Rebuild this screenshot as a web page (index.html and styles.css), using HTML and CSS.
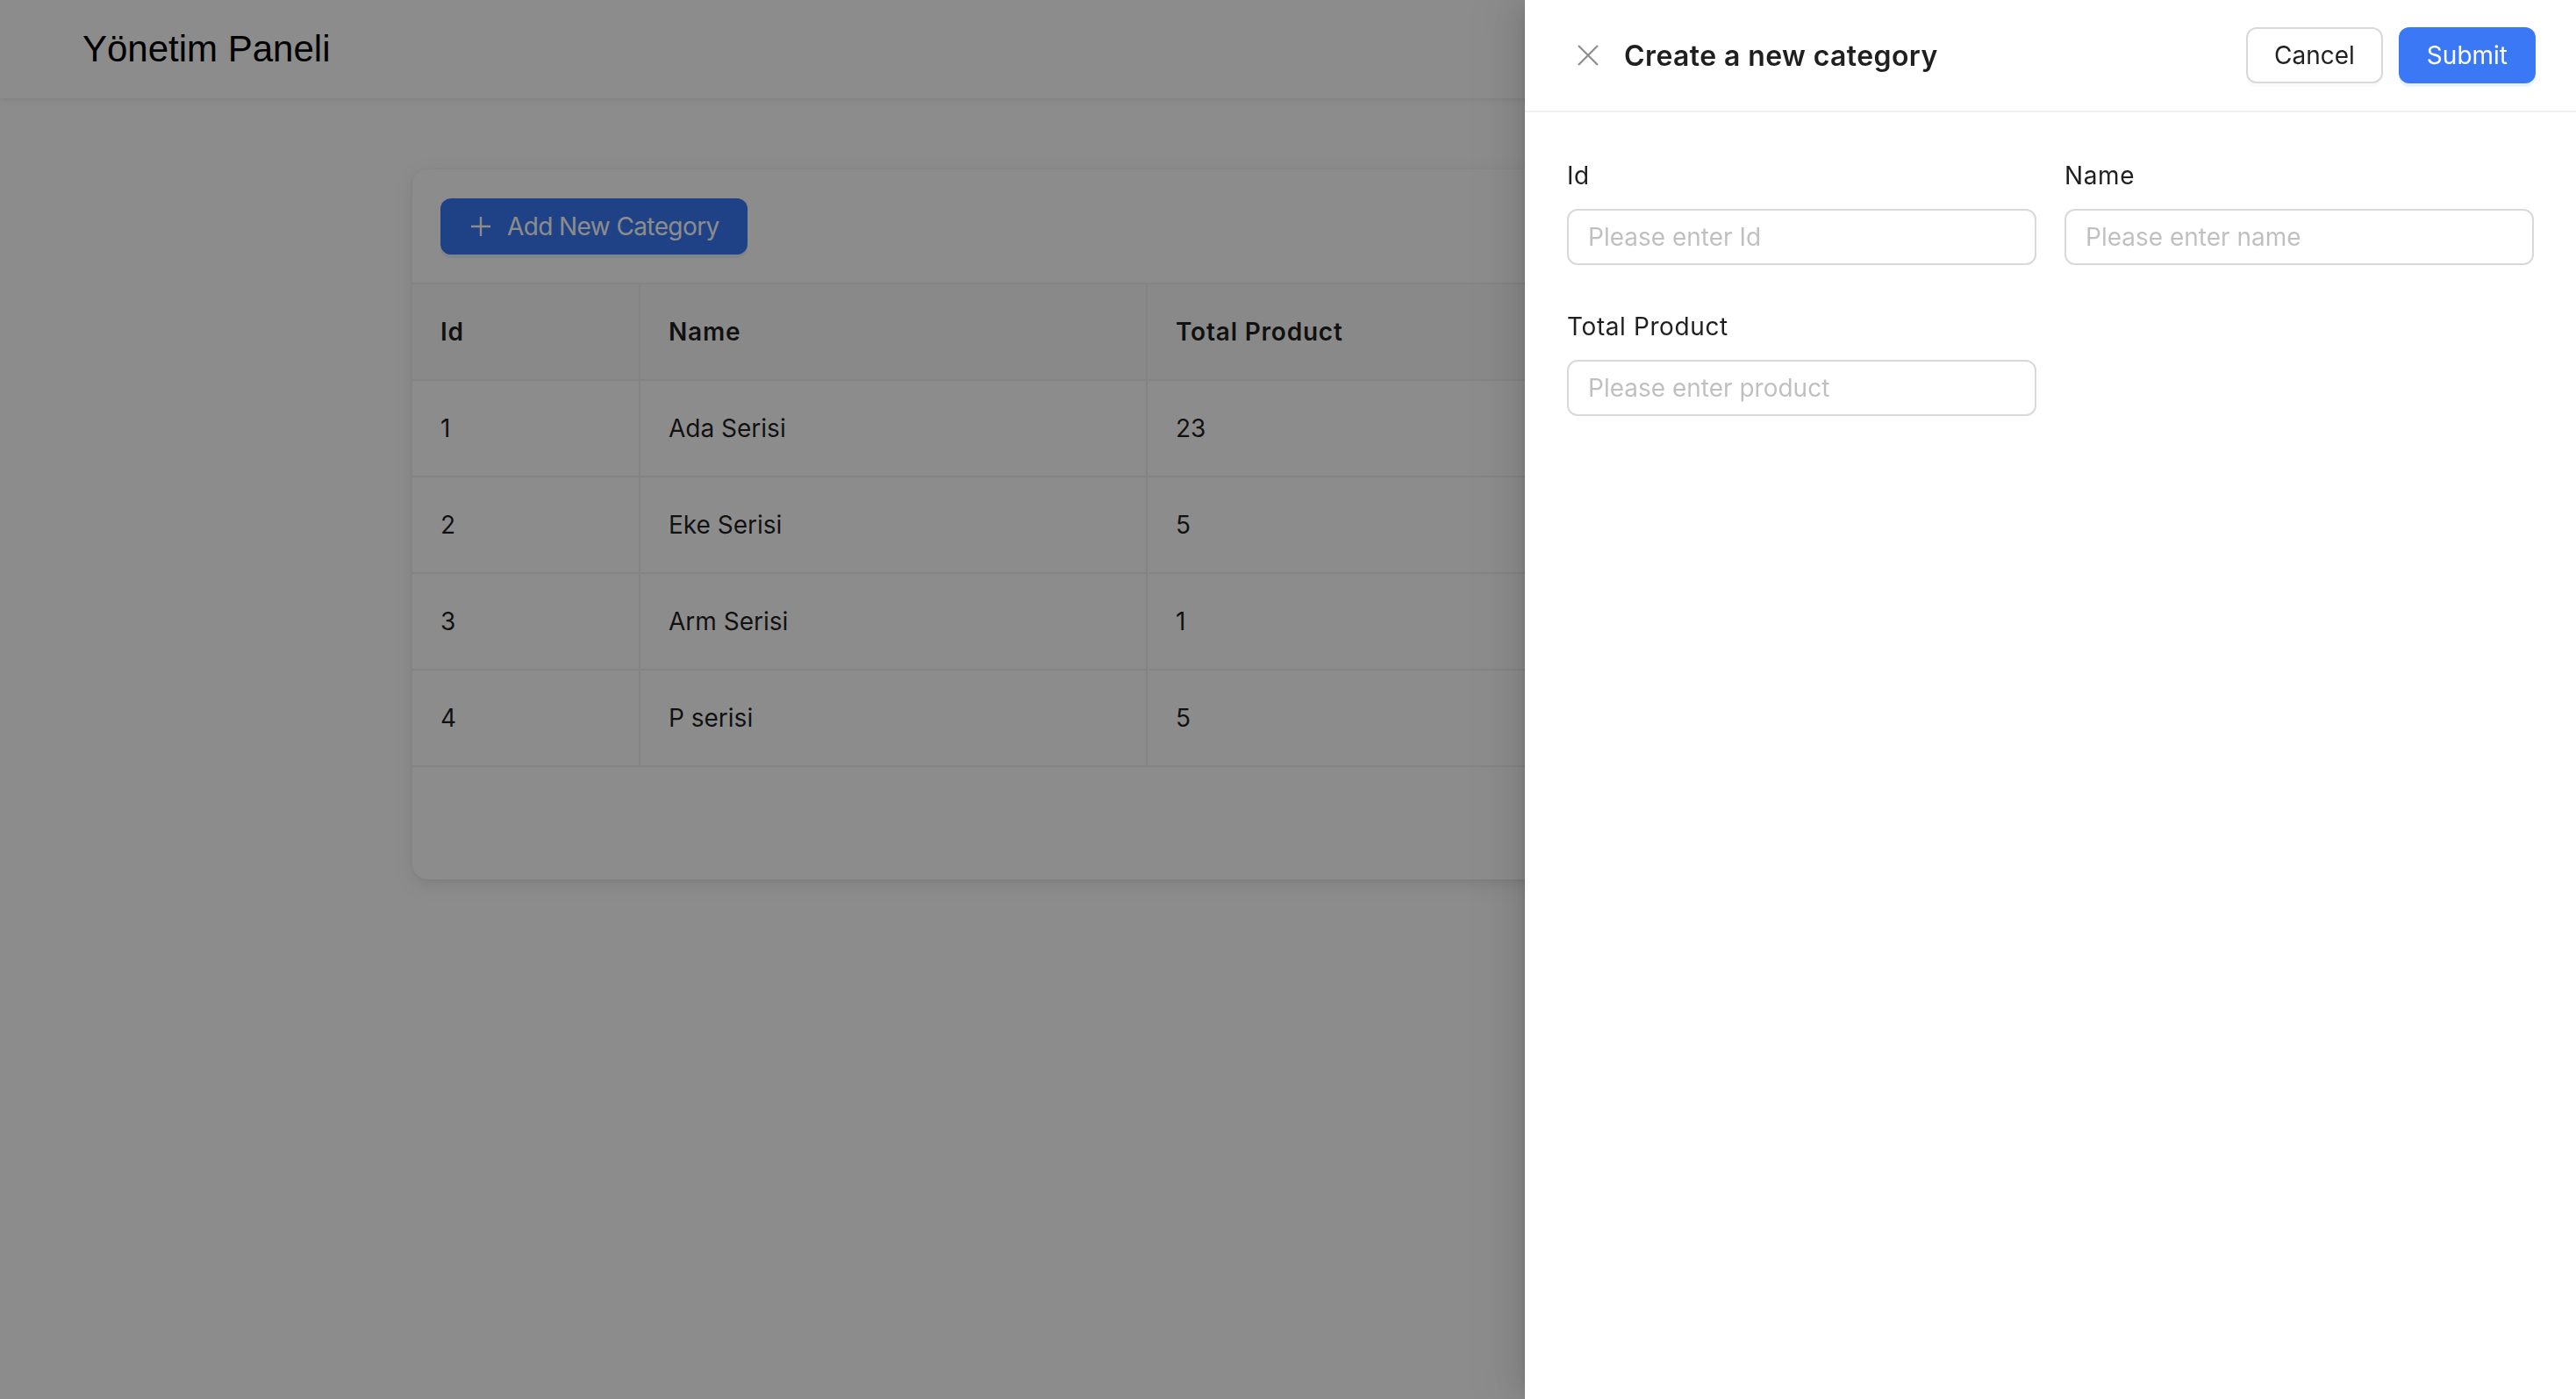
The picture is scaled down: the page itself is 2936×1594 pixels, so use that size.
FILE: index.html
```html
<!DOCTYPE html>
<html lang="tr">
<head>
<meta charset="utf-8">
<title>Yönetim Paneli</title>
<link rel="stylesheet" href="styles.css">
</head>
<body>
<div class="app">
  <header class="topbar">
    <div class="brand">Yönetim Paneli</div>
  </header>
  <main class="main">
    <section class="card">
      <div class="toolbar">
        <button class="btn btn-primary btn-add" type="button">
          <svg class="icon-plus" viewBox="0 0 28 28" width="28" height="28" aria-hidden="true">
            <path d="M14 3v22M3 14h22" stroke="currentColor" stroke-width="2.4" fill="none" stroke-linecap="butt"/>
          </svg>
          <span class="btn-add-text">Add New Category</span>
        </button>
      </div>
      <table class="table">
        <colgroup>
          <col class="c-id">
          <col class="c-name">
          <col class="c-total">
        </colgroup>
        <thead>
          <tr><th>Id</th><th>Name</th><th>Total Product</th></tr>
        </thead>
        <tbody>
          <tr><td>1</td><td>Ada Serisi</td><td>23</td></tr>
          <tr><td>2</td><td>Eke Serisi</td><td>5</td></tr>
          <tr><td>3</td><td>Arm Serisi</td><td>1</td></tr>
          <tr><td>4</td><td>P serisi</td><td>5</td></tr>
        </tbody>
      </table>
      <div class="card-foot"></div>
    </section>
  </main>
</div>

<div class="mask"></div>

<aside class="drawer">
  <div class="drawer-header">
    <button class="drawer-close" type="button" aria-label="Close">
      <svg viewBox="0 0 24 24" width="24" height="24" aria-hidden="true">
        <path d="M1 1L23 23M23 1L1 23" stroke="currentColor" stroke-width="2.2" fill="none"/>
      </svg>
    </button>
    <div class="drawer-title">Create a new category</div>
    <div class="drawer-extra">
      <button class="btn btn-default" type="button">Cancel</button>
      <button class="btn btn-primary" type="button">Submit</button>
    </div>
  </div>
  <div class="drawer-body">
    <form class="form">
      <div class="form-item">
        <label class="form-label" for="f-id">Id</label>
        <input class="input" id="f-id" type="text" placeholder="Please enter Id">
      </div>
      <div class="form-item">
        <label class="form-label" for="f-name">Name</label>
        <input class="input" id="f-name" type="text" placeholder="Please enter name">
      </div>
      <div class="form-item">
        <label class="form-label" for="f-total">Total Product</label>
        <input class="input" id="f-total" type="text" placeholder="Please enter product">
      </div>
    </form>
  </div>
</aside>
</body>
</html>
```

FILE: styles.css
```css
* { box-sizing: border-box; }

html, body {
  margin: 0;
  padding: 0;
  height: 100%;
  background: #ffffff;
}

body {
  font-family: Inter, "Noto Sans", "Liberation Sans", sans-serif;
  font-size: 28px;
  color: rgba(0, 0, 0, 0.88);
  overflow: hidden;
}

.app {
  min-height: 100%;
  display: flex;
  flex-direction: column;
}

.topbar {
  height: 112px;
  display: flex;
  align-items: center;
  padding: 0 94px;
  background: #ffffff;
  box-shadow: 0 2px 6px rgba(0, 0, 0, 0.09);
  position: relative;
  z-index: 1;
}

.brand {
  font-family: "Liberation Sans", Arial, sans-serif;
  font-size: 42px;
  line-height: 112px;
  color: #000000;
}

.main {
  padding: 81px 468px 0 470px;
}

.card {
  background: #ffffff;
  border-radius: 18px;
  box-shadow: 0 6px 22px rgba(0, 0, 0, 0.10), 0 1px 4px rgba(0, 0, 0, 0.05);
  overflow: hidden;
}

.toolbar {
  padding: 33px 32px 32px 32px;
  display: flex;
}

.btn {
  font-family: Inter, "Noto Sans", sans-serif;
  font-size: 28px;
  line-height: 44px;
  height: 64px;
  padding: 8px 30px;
  border-radius: 12px;
  border: 2px solid transparent;
  cursor: pointer;
  display: inline-flex;
  align-items: center;
  white-space: nowrap;
}

.btn-primary {
  background: #3a78f5;
  color: #ffffff;
  box-shadow: 0 4px 0 rgba(5, 145, 255, 0.1);
}

.btn-default {
  background: #ffffff;
  border-color: #d9d9d9;
  color: rgba(0, 0, 0, 0.88);
  box-shadow: 0 4px 0 rgba(0, 0, 0, 0.02);
}

.btn-add {
  gap: 16px;
  padding-left: 30px;
  padding-right: 30px;
}

.btn-add-text {
  letter-spacing: -0.6px;
}

.icon-plus {
  display: block;
  flex: none;
}

.table {
  width: 100%;
  border-collapse: separate;
  border-spacing: 0;
  table-layout: fixed;
  border-top: 2px solid #f0f0f0;
}

.c-id { width: 260px; }
.c-name { width: 578px; }

.table th,
.table td {
  padding: 32px 32px;
  line-height: 44px;
  font-size: 28px;
  text-align: left;
  border-bottom: 2px solid #f0f0f0;
  border-right: 2px solid #f0f0f0;
  color: rgba(0, 0, 0, 0.88);
}

.table th:last-child,
.table td:last-child {
  border-right: none;
}

.table th {
  background: #fafafa;
  font-weight: 600;
  letter-spacing: 0.8px;
}

.table td {
  background: #ffffff;
  font-weight: 400;
}

.card-foot {
  height: 128px;
}

.mask {
  position: fixed;
  inset: 0;
  background: rgba(0, 0, 0, 0.45);
  z-index: 10;
}

.drawer {
  position: fixed;
  top: 0;
  right: 0;
  bottom: 0;
  width: 1198px;
  background: #ffffff;
  z-index: 20;
  display: flex;
  flex-direction: column;
  box-shadow: -12px 0 32px 0 rgba(0, 0, 0, 0.08),
              -6px 0 12px -8px rgba(0, 0, 0, 0.12),
              -18px 0 56px 16px rgba(0, 0, 0, 0.05);
}

.drawer-header {
  height: 128px;
  flex: none;
  display: flex;
  align-items: center;
  padding: 0 46px 0 48px;
  border-bottom: 2px solid #f0f0f0;
}

.drawer-close {
  width: 48px;
  height: 48px;
  padding: 0;
  border: none;
  background: transparent;
  color: rgba(0, 0, 0, 0.45);
  display: flex;
  align-items: center;
  justify-content: center;
  cursor: pointer;
  flex: none;
}

.drawer-close svg { display: block; }

.drawer-title {
  margin-left: 17px;
  padding-top: 2px;
  flex: 1;
  font-size: 32px;
  font-weight: 600;
  line-height: 48px;
  letter-spacing: 0.4px;
  color: rgba(0, 0, 0, 0.88);
}

.drawer-extra {
  display: flex;
  gap: 18px;
}

.drawer-body {
  flex: 1;
  padding: 50px 48px 48px 48px;
}

.form {
  display: grid;
  grid-template-columns: 1fr 1fr;
  column-gap: 32px;
}

.form-item {
  display: flex;
  flex-direction: column;
  margin-bottom: 48px;
}

.form-label {
  font-size: 28px;
  line-height: 44px;
  padding-bottom: 16px;
  letter-spacing: 0.6px;
  color: rgba(0, 0, 0, 0.88);
}

.input {
  height: 64px;
  width: 100%;
  border: 2px solid #d9d9d9;
  border-radius: 12px;
  padding: 0 22px;
  font-family: Inter, "Noto Sans", sans-serif;
  font-size: 28px;
  color: rgba(0, 0, 0, 0.88);
  background: #ffffff;
  outline: none;
}

.input::placeholder {
  color: rgba(0, 0, 0, 0.25);
}
```
